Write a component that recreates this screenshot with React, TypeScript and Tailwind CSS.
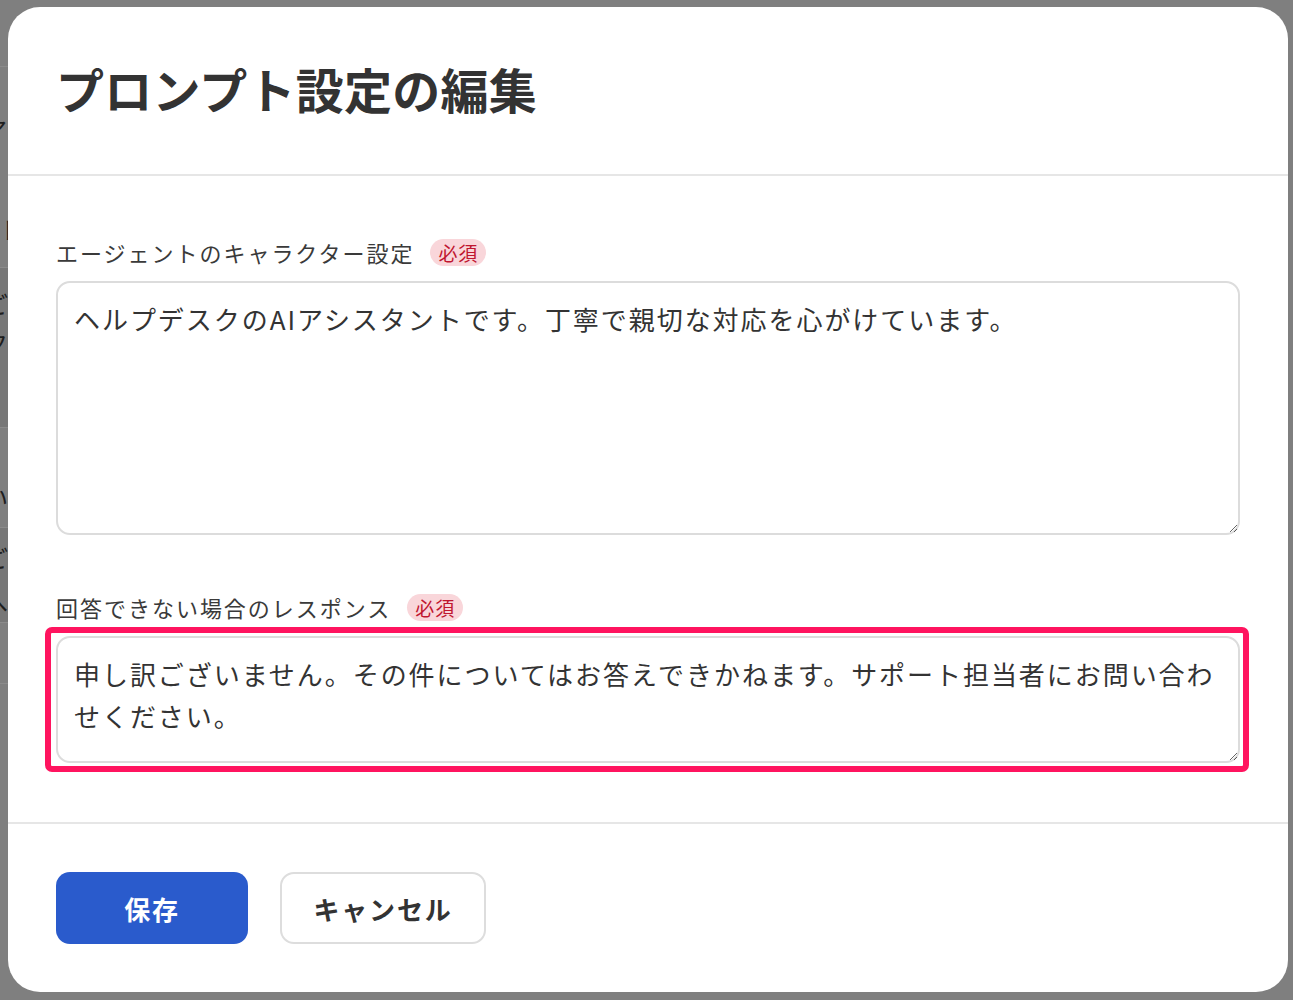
import React from "react";

function Badge() {
  return (
    <span className="inline-flex h-[27px] items-center rounded-full bg-[#f9d6da] px-[8px] text-[19px] leading-[27px] tracking-[0.05em] text-[#c0152f]">
      必須
    </span>
  );
}

function Field({
  label,
  value,
  heightClass,
  highlighted,
}: {
  label: string;
  value: string;
  heightClass: string;
  highlighted?: boolean;
}) {
  return (
    <div className="flex flex-col">
      <div className="mb-[15px] flex h-[27px] items-center gap-4">
        <span className="text-[22px] leading-[27px] tracking-[0.09em] text-[#3a3a3a]">{label}</span>
        <Badge />
      </div>
      <div className="relative">
        <textarea
          defaultValue={value}
          className={`block w-full ${heightClass} rounded-[14px] border-2 border-[#dcdcdc] bg-white px-4 py-[15px] text-[26px] leading-[42px] tracking-[0.075em] text-[#333333] outline-none font-['Noto_Sans_CJK_JP',sans-serif]`}
        />
        {highlighted && (
          <div className="pointer-events-none absolute -top-[9px] -bottom-[9px] -left-[11px] -right-[9px] rounded-[7px] border-[6px] border-[#ff145f]" />
        )}
      </div>
    </div>
  );
}

export default function App() {
  return (
    <div className="relative h-[1000px] w-full overflow-hidden bg-[#7f7f7f] font-['Noto_Sans_CJK_JP','Noto_Sans',sans-serif]">
      {/* dimmed page behind the dialog */}
      <div className="flex w-[40px] flex-col text-[24px] leading-none text-[#1e1e1e]">
        <div className="h-[67px] border-b border-[#8b8b8b]" />
        <div className="flex h-[201px] flex-col border-b border-[#8b8b8b]">
          <span className="-ml-[17px] mt-[50px] whitespace-nowrap">ア</span>
          <span className="-ml-[1px] mt-[76px] whitespace-nowrap">ト</span>
        </div>
        <div className="flex h-[160px] flex-col border-b border-[#8b8b8b] bg-[#777777]">
          <span className="-ml-[16px] mt-[24px] whitespace-nowrap">ご</span>
          <span className="-ml-[16px] mt-[14px] whitespace-nowrap">ク</span>
        </div>
        <div className="flex h-[100px] flex-col border-b border-[#8b8b8b]">
          <span className="-ml-[16px] mt-[57px] whitespace-nowrap">い</span>
        </div>
        <div className="flex h-[95px] flex-col border-b border-[#8b8b8b] bg-[#777777]">
          <span className="-ml-[16px] mt-[18px] whitespace-nowrap">ご</span>
          <span className="-ml-[16px] mt-[20px] whitespace-nowrap">へ</span>
        </div>
        <div className="h-[61px] border-b border-[#8b8b8b]" />
      </div>

      {/* dialog */}
      <div className="absolute left-[8px] top-[7px] flex w-[1280px] flex-col rounded-[32px] bg-white">
        <div className="border-b-2 border-[#e6e6e6] px-12 pt-[45px] pb-[50px]">
          <h1 className="text-[48px] font-bold leading-[72px] tracking-[0.005em] text-[#333333]">プロンプト設定の編集</h1>
        </div>
        <div className="flex flex-col gap-[59px] px-12 pt-[63px] pb-[59px]">
          <Field
            label="エージェントのキャラクター設定"
            value="ヘルプデスクのAIアシスタントです。丁寧で親切な対応を心がけています。"
            heightClass="h-[254px]"
          />
          <Field
            label="回答できない場合のレスポンス"
            value="申し訳ございません。その件についてはお答えできかねます。サポート担当者にお問い合わせください。"
            heightClass="h-[127px]"
            highlighted
          />
        </div>
        <div className="flex gap-8 border-t-2 border-[#e6e6e6] px-12 pt-[48px] pb-[48px]">
          <button className="h-[72px] w-[192px] rounded-[14px] bg-[#2a5bcc] text-[26px] font-bold tracking-[0.07em] text-white">
            保存
          </button>
          <button className="h-[72px] w-[206px] rounded-[14px] border-2 border-[#dddddd] bg-white text-[26px] font-bold tracking-[0.07em] text-[#333333]">
            キャンセル
          </button>
        </div>
      </div>
    </div>
  );
}
